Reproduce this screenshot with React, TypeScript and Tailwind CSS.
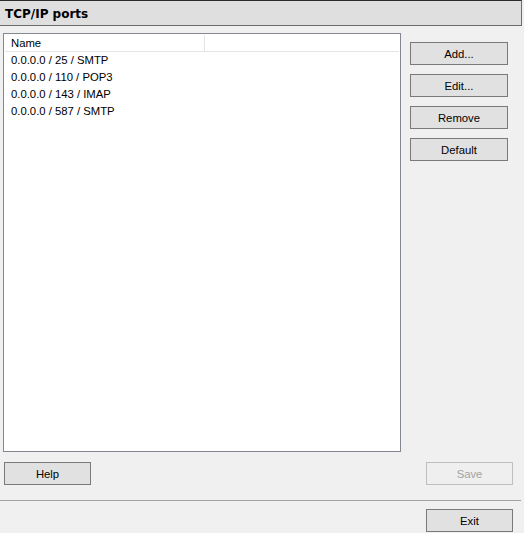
import React from 'react';

const ports = [
  '0.0.0.0 / 25 / SMTP',
  '0.0.0.0 / 110 / POP3',
  '0.0.0.0 / 143 / IMAP',
  '0.0.0.0 / 587 / SMTP',
];

const Btn = ({ label, disabled }: { label: string; disabled?: boolean }) => (
  <button
    className={
      disabled
        ? 'h-[23px] w-[87px] pt-[2px] border border-[#bfbfbf] bg-[#efefef] text-[#a3a3a3] text-[11.3px] leading-none'
        : 'h-[23px] w-[87px] pt-[2px] border border-[#7a7a7a] bg-[#e1e1e1] text-black text-[11.3px] leading-none'
    }
  >
    {label}
  </button>
);

const SideBtn = ({ label }: { label: string }) => (
  <button className="h-[23px] w-[98px] pt-[2px] border border-[#7a7a7a] bg-[#e1e1e1] text-black text-[11.3px] leading-none">
    {label}
  </button>
);

export default function App() {
  return (
    <div
      className="w-[524px] h-[533px] bg-[#f0f0f0] overflow-hidden flex flex-col"
      style={{ fontFamily: '"Liberation Sans", Arial, sans-serif' }}
    >
      {/* title bar */}
      <div className="w-[522px] h-[26px] shrink-0 bg-[#dfdfdf] border-t border-t-[#2b2b2b] border-b border-r border-[#6d6d6d] flex items-center pl-[5px]">
        <span
          className="text-[12px] font-bold text-black pt-[1px]"
          style={{ fontFamily: '"DejaVu Sans", Tahoma, sans-serif' }}
        >
          TCP/IP ports
        </span>
      </div>

      <div className="flex">
        {/* list */}
        <div className="ml-[3px] mt-[7px] w-[398px] h-[419px] border border-[#828790] bg-white pt-[1px] px-[1px]">
          <div className="flex h-[17px] border-b border-[#e5e5e5]">
            <div className="w-[200px] border-r border-[#e5e5e5] pl-[6px] text-[11.3px] leading-[17px] text-black">
              Name
            </div>
          </div>
          <div className="pl-[6px]">
            {ports.map((p) => (
              <div key={p} className="h-[17px] leading-[17px] text-[11.3px] text-black">
                {p}
              </div>
            ))}
          </div>
        </div>

        {/* side buttons */}
        <div className="ml-[9px] mt-[16px] flex flex-col gap-[9px]">
          <SideBtn label="Add..." />
          <SideBtn label="Edit..." />
          <SideBtn label="Remove" />
          <SideBtn label="Default" />
        </div>
      </div>

      <div className="flex justify-between mt-[10px] pl-[4px] pr-[11px]">
        <Btn label="Help" />
        <Btn label="Save" disabled />
      </div>

      <div className="mt-[15px] w-[521px] h-[1px] bg-[#a0a0a0]" />

      <div className="flex justify-end mt-[8px] pr-[11px]">
        <Btn label="Exit" />
      </div>
    </div>
  );
}
